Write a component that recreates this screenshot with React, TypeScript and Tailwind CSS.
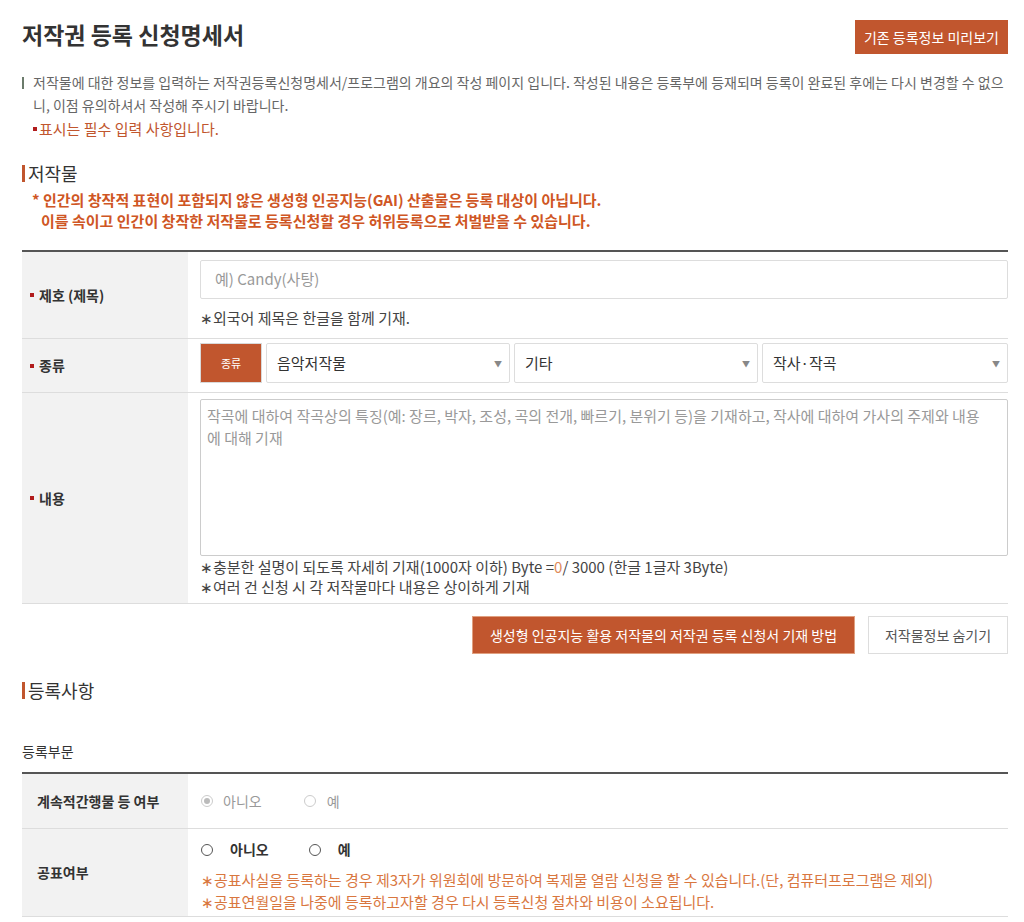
import React from "react";

const font = { fontFamily: '"Noto Sans CJK KR", "Noto Sans", sans-serif' };

function Arrow() {
  return <span className="text-[8px] text-[#888] mt-[1px]">▼</span>;
}

function Select({ value, className }: { value: string; className: string }) {
  return (
    <div className={`h-[40px] border border-[#ddd] rounded-[2px] flex items-center justify-between pl-[10px] pr-[7px] text-[15px] text-[#333] bg-white ${className}`}>
      <span>{value}</span>
      <Arrow />
    </div>
  );
}

function Label({ text, req = true }: { text: string; req?: boolean }) {
  return (
    <div className="w-[166px] shrink-0 bg-[#f2f2f2] flex items-center pl-[8px] text-[14px] font-bold text-[#333]">
      {req && <span className="w-[4px] h-[4px] bg-[#b11c1c] mr-[5px] inline-block" />}
      <span>{text}</span>
    </div>
  );
}

function Radio({ checked, disabled }: { checked?: boolean; disabled?: boolean }) {
  return (
    <span className={`w-[12px] h-[12px] rounded-full border inline-flex items-center justify-center ${disabled ? "border-[#ccc]" : "border-[#555]"}`}>
      {checked && <span className="w-[6px] h-[6px] rounded-full bg-[#bbb]" />}
    </span>
  );
}

export default function App() {
  return (
    <div style={font} className="bg-white w-[1024px] min-h-[922px] pl-[22px] pr-[16px] pt-[20px] text-[#333]">
      <div className="flex items-start justify-between">
        <h1 className="text-[23px] font-bold text-[#333] leading-[26px] pt-[1px]">저작권 등록 신청명세서</h1>
        <button className="h-[34px] px-[9px] bg-[#c1562e] text-white text-[14px]">기존 등록정보 미리보기</button>
      </div>

      <div className="mt-[17px] flex">
        <span className="w-[2px] h-[12px] bg-[#6b7b6b] mt-[6px] shrink-0" />
        <p className="ml-[9px] text-[14px] leading-[23px] text-[#666]">
          저작물에 대한 정보를 입력하는 저작권등록신청명세서/프로그램의 개요의 작성 페이지 입니다. 작성된 내용은 등록부에 등재되며 등록이 완료된 후에는 다시 변경할 수 없으니, 이점 유의하셔서 작성해 주시기 바랍니다.
        </p>
      </div>
      <div className="ml-[11px] flex items-center text-[15px] leading-[23px] text-[#c1562e]">
        <span className="w-[4px] h-[4px] bg-[#b11c1c] mr-[2px]" />
        표시는 필수 입력 사항입니다.
      </div>

      <div className="mt-[21px] flex items-center">
        <span className="w-[3px] h-[17px] bg-[#c1562e]" />
        <h2 className="ml-[3px] text-[18px] leading-[24px] text-[#333]">저작물</h2>
      </div>
      <div className="mt-[4px] ml-[10px] text-[15px] font-bold leading-[21px] text-[#cf5624]">
        <p>* 인간의 창작적 표현이 포함되지 않은 생성형 인공지능(GAI) 산출물은 등록 대상이 아닙니다.</p>
        <p className="ml-[9px]">이를 속이고 인간이 창작한 저작물로 등록신청할 경우 허위등록으로 처벌받을 수 있습니다.</p>
      </div>

      <div className="mt-[19px] border-t-2 border-[#555]">
        <div className="flex border-b border-[#ddd] h-[87px]">
          <Label text="제호 (제목)" />
          <div className="flex-1 pl-[12px] pt-[8px]">
            <div className="h-[39px] border border-[#ddd] rounded-[2px] flex items-center pl-[14px] text-[15px] text-[#999]">예) Candy(사탕)</div>
            <p className="mt-[9px] text-[15px] text-[#444] leading-[20px]">∗외국어 제목은 한글을 함께 기재.</p>
          </div>
        </div>
        <div className="flex border-b border-[#ddd] h-[54px]">
          <Label text="종류" />
          <div className="flex-1 pl-[12px] pt-[4px] flex gap-[4px]">
            <div className="w-[62px] h-[40px] bg-[#c1562e] border border-[#d9d9d9] text-white text-[11px] flex items-center justify-center">종류</div>
            <Select value="음악저작물" className="w-[244px]" />
            <Select value="기타" className="w-[244px]" />
            <Select value="작사·작곡" className="flex-1" />
          </div>
        </div>
        <div className="flex border-b border-[#ddd] h-[211px]">
          <Label text="내용" />
          <div className="flex-1 pl-[12px] pt-[6px]">
            <div className="h-[157px] border border-[#ccc] rounded-[2px] pl-[6px] pr-[16px] py-[5px] text-[15px] leading-[22px] text-[#999] break-all">
              작곡에 대하여 작곡상의 특징(예: 장르, 박자, 조성, 곡의 전개, 빠르기, 분위기 등)을 기재하고, 작사에 대하여 가사의 주제와 내용에 대해 기재
            </div>
            <p className="mt-[1px] text-[15px] leading-[20px] text-[#444]">
              ∗충분한 설명이 되도록 자세히 기재(1000자 이하) Byte =<span className="text-[#e08a5a]">0</span>/ 3000 (한글 1글자 3Byte)
            </p>
            <p className="text-[15px] leading-[20px] text-[#444]">∗여러 건 신청 시 각 저작물마다 내용은 상이하게 기재</p>
          </div>
        </div>
      </div>

      <div className="mt-[12px] flex justify-end gap-[13px]">
        <button className="h-[38px] w-[383px] bg-[#c1562e] border border-[#e0a080] text-white text-[14px]">생성형 인공지능 활용 저작물의 저작권 등록 신청서 기재 방법</button>
        <button className="h-[38px] w-[140px] bg-white border border-[#ddd] text-[#555] text-[14px]">저작물정보 숨기기</button>
      </div>

      <div className="mt-[24px] flex items-center">
        <span className="w-[3px] h-[17px] bg-[#c1562e]" />
        <h2 className="ml-[3px] text-[18px] leading-[24px] text-[#333]">등록사항</h2>
      </div>

      <p className="mt-[39px] text-[14px] leading-[20px] text-[#333]">등록부문</p>

      <div className="mt-[11px] border-t-2 border-[#555]">
        <div className="flex border-b border-[#ddd] h-[55px]">
          <div className="w-[166px] shrink-0 bg-[#f2f2f2] flex items-center pl-[15px] text-[14px] font-bold text-[#333]">계속적간행물 등 여부</div>
          <div className="flex-1 pl-[13px] flex items-center text-[14px] text-[#999]">
            <Radio checked disabled />
            <span className="ml-[10px]">아니오</span>
            <span className="ml-[42px] flex items-center"><Radio disabled /></span>
            <span className="ml-[11px]">예</span>
          </div>
        </div>
        <div className="flex border-b border-[#ddd] h-[88px]">
          <div className="w-[166px] shrink-0 bg-[#f2f2f2] flex items-center pl-[15px] text-[14px] font-bold text-[#333]">공표여부</div>
          <div className="flex-1 pl-[13px] pt-[10px]">
            <div className="flex items-center text-[14px] font-bold text-[#333]">
              <Radio />
              <span className="ml-[17px]">아니오</span>
              <span className="ml-[40px] flex items-center"><Radio /></span>
              <span className="ml-[17px]">예</span>
            </div>
            <p className="mt-[9px] text-[15px] leading-[22px] text-[#d9773f]">∗공표사실을 등록하는 경우 제3자가 위원회에 방문하여 복제물 열람 신청을 할 수 있습니다.(단, 컴퓨터프로그램은 제외)</p>
            <p className="text-[15px] leading-[22px] text-[#d9773f]">∗공표연월일을 나중에 등록하고자할 경우 다시 등록신청 절차와 비용이 소요됩니다.</p>
          </div>
        </div>
      </div>
    </div>
  );
}
